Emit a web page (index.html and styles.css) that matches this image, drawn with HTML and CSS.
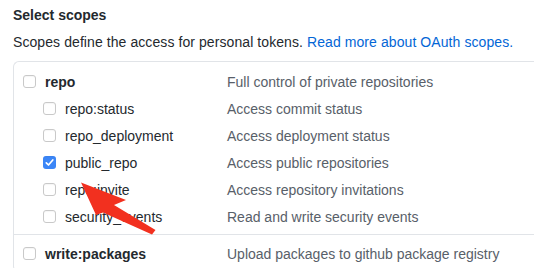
FILE: index.html
```html
<!DOCTYPE html>
<html>
<head>
  <meta charset="utf-8">
  <title>Select scopes</title>
  <link rel="stylesheet" href="styles.css">
</head>
<body>
  <div class="page">
    <!-- Heading -->
    <h3 class="title">Select scopes</h3>
    <p class="note">Scopes define the access for personal tokens. <a href="#">Read more about OAuth scopes.</a></p>

    <!-- Scope list -->
    <div class="scopes">
      <div class="group">
        <div class="row">
          <label class="scope top"><span class="box"></span>repo</label>
          <span class="desc">Full control of private repositories</span>
        </div>
        <div class="row sub">
          <label class="scope"><span class="box"></span>repo:status</label>
          <span class="desc">Access commit status</span>
        </div>
        <div class="row sub">
          <label class="scope"><span class="box"></span>repo_deployment</label>
          <span class="desc">Access deployment status</span>
        </div>
        <div class="row sub">
          <label class="scope"><span class="box checked"><svg viewBox="0 0 13 13" width="13" height="13"><path d="M3.3 6.8 L5.5 9 L9.8 4" fill="none" stroke="#fff" stroke-width="1.7" stroke-linecap="round" stroke-linejoin="round"/></svg></span>public_repo</label>
          <span class="desc">Access public repositories</span>
        </div>
        <div class="row sub">
          <label class="scope"><span class="box"></span>repo:invite</label>
          <span class="desc">Access repository invitations</span>
        </div>
        <div class="row sub">
          <label class="scope"><span class="box"></span>security_events</label>
          <span class="desc">Read and write security events</span>
        </div>
      </div>
      <div class="group">
        <div class="row">
          <label class="scope top"><span class="box"></span>write:packages</label>
          <span class="desc">Upload packages to github package registry</span>
        </div>
      </div>
    </div>

    <!-- Red pointer -->
    <svg class="arrow" width="534" height="268" viewBox="0 0 534 268">
      <polygon points="81,182.5 126,200 114,205 155.5,230 152,234.5 103,212.5 96,215" fill="#f2301f"/>
    </svg>
  </div>
</body>
</html>
```

FILE: styles.css
```css
body {
  margin: 0;
  font-family: 'Liberation Sans', Arial, sans-serif;
  color: #24292e;
  background-color: #fff;
  overflow: hidden;
}
.page {
  position: relative;
  padding: 5px 0 0 13px;
  height: 268px;
  box-sizing: border-box;
  overflow: hidden;
}
.title {
  margin: 0;
  font-size: 14px;
  line-height: 20px;
  font-weight: bold;
}
.note {
  margin: 7px 0 0 0;
  font-size: 14px;
  line-height: 20px;
  letter-spacing: 0.08px;
}
.note a {
  color: #0366d6;
  text-decoration: none;
}
.scopes {
  margin-top: 9px;
  width: 540px;
  border: 1px solid #e1e4e8;
  border-right: none;
  border-radius: 6px 0 0 6px;
}
.group {
  padding: 6px 0 4px 9px;
}
.group + .group {
  border-top: 1px solid #e1e4e8;
  padding-top: 5px;
}
.row {
  display: grid;
  grid-template-columns: 204px 1fr;
  align-items: center;
  height: 27px;
  font-size: 14px;
}
.scope {
  display: flex;
  align-items: center;
  gap: 9px;
}
.scope.top {
  font-weight: bold;
}
.sub .scope {
  padding-left: 20px;
}
.box {
  width: 13px;
  height: 13px;
  box-sizing: border-box;
  border: 1px solid #c9c9c9;
  border-radius: 3px;
  background-color: #fff;
  box-shadow: inset 0 1px 1px rgba(0, 0, 0, 0.04);
}
.box.checked {
  border: none;
  background-color: #3b86f7;
}
.box svg {
  display: block;
}
.desc {
  color: #586069;
}
.arrow {
  position: absolute;
  left: 0;
  top: 0;
  pointer-events: none;
}
```
